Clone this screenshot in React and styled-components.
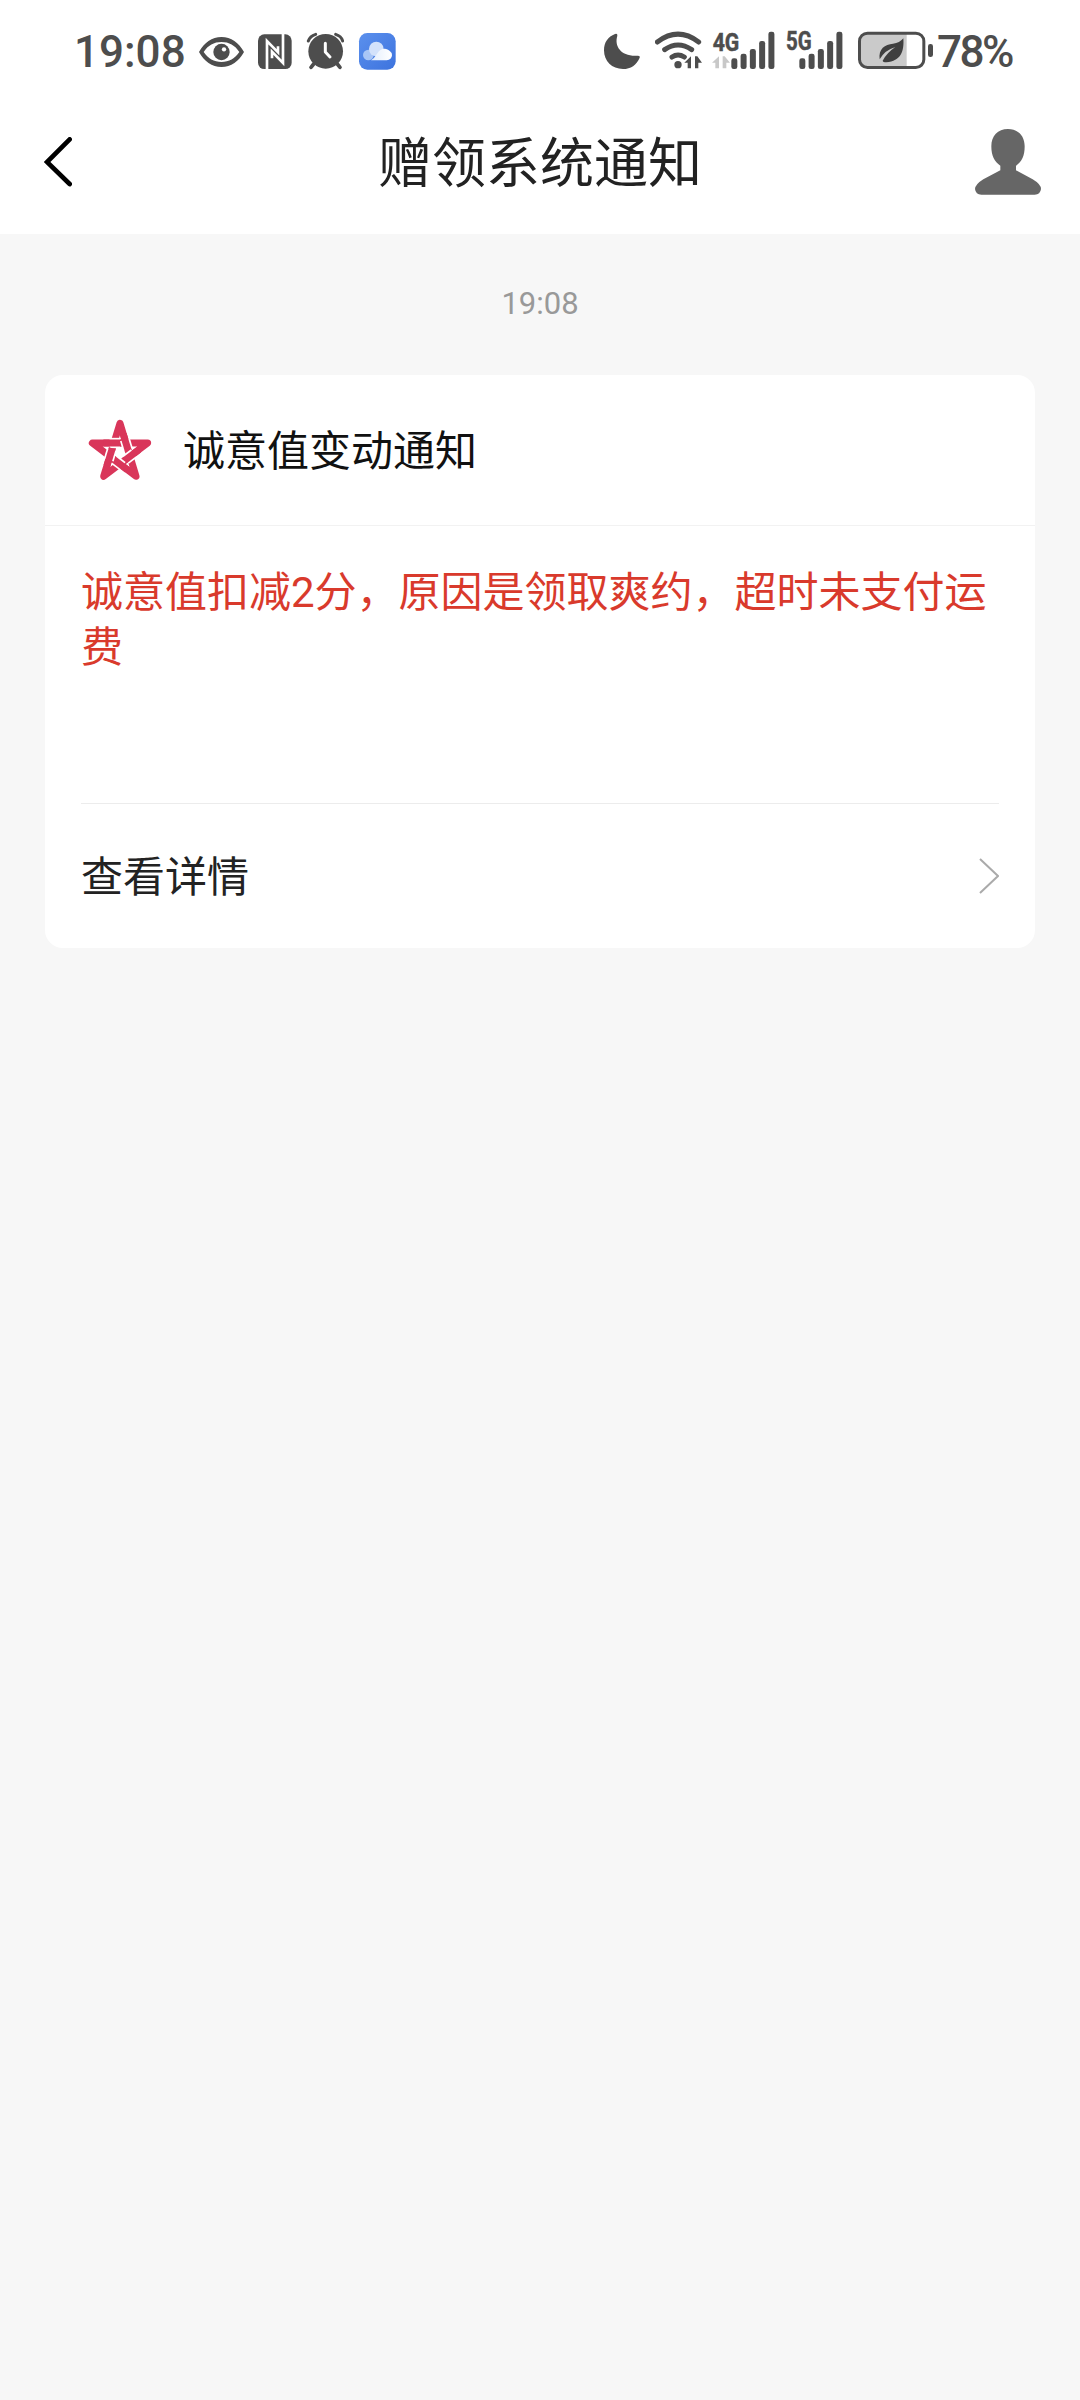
import React from 'react';
import styled, { createGlobalStyle } from 'styled-components';

const GlobalStyle = createGlobalStyle`
  * { box-sizing: border-box; }
  html, body { margin: 0; padding: 0; background: #f7f7f7; }
  body { font-family: Roboto, "Noto Sans CJK SC", sans-serif; }
`;

const Screen = styled.div`
  width: 1080px;
  min-height: 2400px;
  background: #f7f7f7;
  display: flex;
  flex-direction: column;
`;

const StatusBar = styled.div`
  height: 102px;
  padding: 15px 66px 12px 74px;
  background: #fff;
  color: #4d4d4d;
  display: flex;
  justify-content: space-between;
`;

const StatusGroup = styled.div`
  display: flex;
  align-items: flex-start;
  gap: ${(p) => p.$gap}px;
`;

const StatusText = styled.span`
  width: ${(p) => p.$width}px;
  height: 75px;
  line-height: 75px;
  font-size: 44px;
  font-weight: 500;
  white-space: nowrap;
  letter-spacing: ${(p) => p.$spacing || 0}px;
`;

const Glyph = styled.svg`
  display: block;
  flex: none;
`;

const Header = styled.header`
  height: 132px;
  padding: 0 39px 12px 44px;
  background: #fff;
  display: grid;
  grid-template-columns: 100px 1fr 100px;
  align-items: center;
`;

const HeaderButton = styled.button`
  border: 0;
  padding: 0;
  background: none;
  display: flex;
  justify-content: ${(p) => (p.$end ? 'flex-end' : 'flex-start')};
`;

const Title = styled.h1`
  margin: 0;
  padding: 6px 5px 0 0;
  font-size: 54px;
  font-weight: 400;
  line-height: 72px;
  text-align: center;
  color: #222;
`;

const Content = styled.main`
  display: flex;
  flex-direction: column;
  padding: 49px 45px 45px;
`;

const Timestamp = styled.time`
  height: 42px;
  line-height: 42px;
  margin-bottom: 50px;
  text-align: center;
  font-size: 31px;
  color: #999;
`;

const Card = styled.section`
  height: 573px;
  background: #fff;
  border-radius: 18px;
  display: flex;
  flex-direction: column;
`;

const CardHead = styled.div`
  height: 151px;
  padding-left: 30px;
  border-bottom: 1px solid #f2f2f2;
  display: flex;
  align-items: center;
  gap: 18px;
`;

const CardTitle = styled.h2`
  margin: 0;
  padding-top: 4px;
  font-size: 42px;
  font-weight: 400;
  line-height: 60px;
  color: #111;
`;

const CardBody = styled.div`
  flex: 1;
  margin: 0 36px;
  padding-top: 39px;
  border-bottom: 1px solid #ececec;
`;

const Message = styled.p`
  margin: 0;
  font-size: 42px;
  line-height: 55px;
  color: #d93a2c;
`;

const DetailRow = styled.a`
  height: 144px;
  padding: 0 36px;
  display: flex;
  align-items: center;
  justify-content: space-between;
`;

const DetailLabel = styled.span`
  padding-top: 4px;
  font-size: 42px;
  line-height: 60px;
  color: #222;
`;

function StatusIcon({ x, w, children }) {
  return (
    <Glyph width={w / 3} height="75" viewBox={`${x} 0 ${w} 225`} fill="#4d4d4d">
      {children}
    </Glyph>
  );
}

function Bars({ x }) {
  const tops = [130, 116, 102, 78, 50];
  return tops.map((top, i) => (
    <rect key={top} x={x + i * 27.8} y={top} width="18" height={162 - top} rx="7" />
  ));
}

const TIPS = { T: [135, 55], R: [218, 114], BR: [183, 214], BL: [86, 214], L: [52, 114] };
const BANDS = [['L', 'R'], ['T', 'BR'], ['R', 'BL'], ['BR', 'L'], ['BL', 'T']];

function between(a, b, t) {
  return [a[0] + (b[0] - a[0]) * t, a[1] + (b[1] - a[1]) * t];
}

function StarLogo() {
  const outline = ['T', 'BR', 'L', 'R', 'BL'].map((k) => TIPS[k].join(',')).join(' ');
  return (
    <Glyph width="90" height="90" viewBox="0 0 270 270" fill="none">
      <polygon points={outline} stroke="#d9365a" strokeWidth="21" strokeLinejoin="round" />
      {BANDS.map(([from, to]) => {
        const a = TIPS[from];
        const b = TIPS[to];
        const g1 = between(a, b, 0.31);
        const g2 = between(a, b, 0.5);
        const s1 = between(a, b, 0.2);
        const s2 = between(a, b, 0.53);
        return (
          <g key={from + to}>
            <line x1={g1[0]} y1={g1[1]} x2={g2[0]} y2={g2[1]} stroke="#fff" strokeWidth="31" />
            <line x1={s1[0]} y1={s1[1]} x2={s2[0]} y2={s2[1]} stroke="#d9365a" strokeWidth="21" />
          </g>
        );
      })}
    </Glyph>
  );
}

export default function App() {
  return (
    <>
      <GlobalStyle />
      <Screen>
        <StatusBar>
          <StatusGroup $gap={14}>
            <StatusText $width={110}>19:08</StatusText>
            <StatusIcon x={24} w={138}>
              <path fillRule="evenodd" d="M27 111C42 83 66 66 94.500 66S147 83 162 111C147 139 123 156 94.500 156S42 139 27 111ZM41 111C54 131 72 141 94.500 141S135 131 148 111C135 91 117 81 94.500 81S54 91 41 111Z" />
              <circle cx="94.500" cy="111" r="24.500" />
              <circle cx="102" cy="103" r="6.500" fill="#fff" />
            </StatusIcon>
            <StatusIcon x={204} w={102}>
              <rect x="204" y="58" width="101" height="104" rx="19" />
              <g fill="none" stroke="#fff" strokeWidth="8">
                <path d="M231 166V78L264 112V94" />
                <path d="M279 50V144L246 110V130" />
              </g>
            </StatusIcon>
            <StatusIcon x={348} w={114}>
              <g fill="none" stroke="#4d4d4d" strokeLinecap="round">
                <path d="M355 78Q360 63 377 58M437 58Q454 63 458 78" strokeWidth="9" />
                <path d="M371 147L363 157M442 147L450 157" strokeWidth="11" />
              </g>
              <circle cx="407" cy="109" r="52" />
              <path d="M406 85V111L420 126" fill="none" stroke="#fff" strokeWidth="9" strokeLinecap="round" strokeLinejoin="round" />
            </StatusIcon>
            <StatusIcon x={504} w={114}>
              <defs>
                <linearGradient id="cloudTile" x1="0" y1="0" x2="1" y2="1">
                  <stop offset="0" stopColor="#5b90ed" />
                  <stop offset="1" stopColor="#3d73de" />
                </linearGradient>
                <linearGradient id="cloudFront" x1="1" y1="0" x2="0" y2="0">
                  <stop offset="0" stopColor="#fff" />
                  <stop offset="1" stopColor="#e4eefd" />
                </linearGradient>
              </defs>
              <rect x="507" y="54" width="110" height="110" rx="25" fill="url(#cloudTile)" />
              <circle cx="535" cy="120" r="16" fill="#a9c6f6" />
              <circle cx="559" cy="102" r="22" fill="#d3e2fb" />
              <path d="M543 136Q552 131 561 116Q571 100 585 101Q598 104 600 109Q607 114 606 121Q605 135 590 136Z" fill="url(#cloudFront)" />
            </StatusIcon>
          </StatusGroup>

          <StatusGroup $gap={10}>
            <StatusIcon x={42} w={123}>
              <path d="M75 57Q83 54 82 62C72 94 94 125 142 122Q151 121 149 128C140 150 122 162 99 162C66 162 42 139 42 106C42 82 54 65 75 57Z" />
            </StatusIcon>
            <StatusIcon x={195} w={141}>
              <g fill="none" stroke="#4d4d4d" strokeWidth="15" strokeLinecap="round">
                <path d="M202 81Q264 34 326 81" />
                <path d="M224 104Q264 76 305 104" />
                <path d="M246 126Q264 114 283 126" />
              </g>
              <circle cx="264" cy="149" r="11" />
              <path d="M283 143L303 124V160H293V143ZM315 124H322L336 143H325V160H315Z" />
            </StatusIcon>
            <StatusIcon x={366} w={192}>
              <text x="368" y="107" fontFamily="Roboto" fontWeight="700" fontSize="77" textLength="80" lengthAdjust="spacingAndGlyphs" stroke="#4d4d4d" strokeWidth="1.500">4G</text>
              <path fill="#c8c8c8" d="M366 143L387 124V160H376V143ZM398 124H404L420 143H409V160H398Z" />
              <Bars x={424} />
            </StatusIcon>
            <StatusIcon x={48} w={186}>
              <text x="48" y="105" fontFamily="Roboto" fontWeight="700" fontSize="75" textLength="77" lengthAdjust="spacingAndGlyphs" stroke="#4d4d4d" strokeWidth="1.500">5G</text>
              <Bars x={88} />
            </StatusIcon>
            <StatusGroup $gap={4}>
              <StatusIcon x={264} w={225}>
                <rect x="268.500" y="54.500" width="193" height="103" rx="24" fill="#fff" />
                <path d="M410 55H292Q269 55 269 78V134Q269 157 292 157H410Z" fill="#cacaca" />
                <rect x="268.500" y="54.500" width="193" height="103" rx="24" fill="none" stroke="#4d4d4d" strokeWidth="9" />
                <rect x="474" y="87" width="15" height="39" rx="7" />
                <path fill="#3f3f3f" d="M400 70C403 108 393 139 349 142Q339 142 338 137Q351 113 376 96Q345 105 329 133C325 101 345 88 369 86Q389 84 400 70Z" />
              </StatusIcon>
              <StatusText $width={77} $spacing={-2.5}>78%</StatusText>
            </StatusGroup>
          </StatusGroup>
        </StatusBar>

        <Header>
          <HeaderButton aria-label="返回">
            <Glyph width="28" height="50" viewBox="132 81 84 150" fill="none">
              <path d="M209 88L141 156L209 222" stroke="#000" strokeWidth="14" strokeLinecap="round" />
            </Glyph>
          </HeaderButton>
          <Title>赠领系统通知</Title>
          <HeaderButton $end aria-label="个人">
            <Glyph width="66" height="66" viewBox="105 57 198 198" fill="#666">
              <path d="M204 57C235 57 254 78 254 109C254 138 246 155 228 167V181L278 208Q303 223 303 237Q301 254 284 254H124Q107 254 105 237Q106 223 130 208L181 181V167C163 155 154 138 154 109C154 78 173 57 204 57Z" />
            </Glyph>
          </HeaderButton>
        </Header>

        <Content>
          <Timestamp>19:08</Timestamp>
          <Card>
            <CardHead>
              <StarLogo />
              <CardTitle>诚意值变动通知</CardTitle>
            </CardHead>
            <CardBody>
              <Message>诚意值扣减2分，原因是领取爽约，超时未支付运费</Message>
            </CardBody>
            <DetailRow>
              <DetailLabel>查看详情</DetailLabel>
              <Glyph width="22" height="38" viewBox="0 0 22 38" fill="none">
                <path d="M3 2L21 19L3 36" stroke="#aaa" strokeWidth="2" />
              </Glyph>
            </DetailRow>
          </Card>
        </Content>
      </Screen>
    </>
  );
}
